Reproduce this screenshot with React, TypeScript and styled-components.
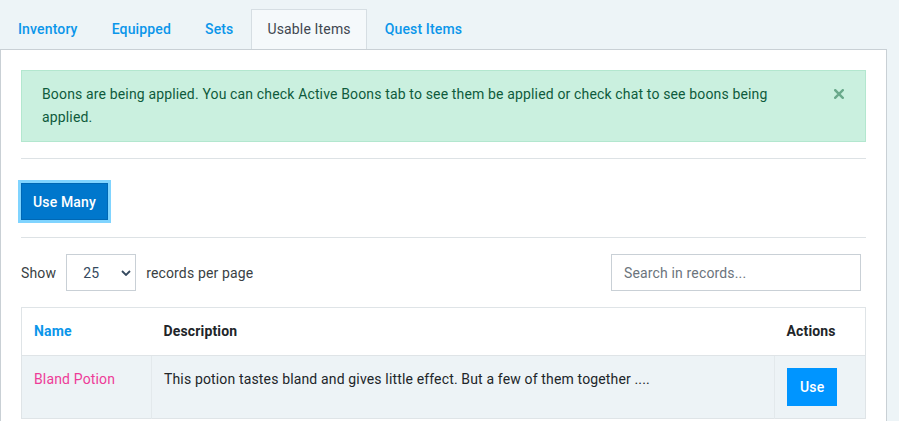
import React from "react";
import styled, { createGlobalStyle } from "styled-components";

const GlobalStyle = createGlobalStyle`
  html, body { margin: 0; padding: 0; }
  body {
    background: #edf4f7;
    font-family: Roboto, "Liberation Sans", Arial, sans-serif;
    font-size: 14px;
    letter-spacing: 0.15px;
    color: #212529;
    overflow: hidden;
  }
  * { box-sizing: border-box; }
  button, input, select { letter-spacing: inherit; }
`;

const Page = styled.div`
  width: 887px;
  padding-top: 9px;
`;

const TabList = styled.div`
  display: flex;
  padding-left: 2px;
  gap: 2px;
`;

const Tab = styled.div<{ $active?: boolean }>`
  padding: 9px 15px 10px;
  line-height: 20px;
  border: 1px solid ${(p) => (p.$active ? "#d6dee3" : "transparent")};
  border-bottom: none;
  background: ${(p) => (p.$active ? "#f5f9fb" : "transparent")};
  color: ${(p) => (p.$active ? "#3f4750" : "#0b96ea")};
  font-weight: ${(p) => (p.$active ? 400 : 500)};
  cursor: pointer;
`;

const Panel = styled.div`
  background: #fff;
  border: 1px solid #c9d0d5;
  border-bottom: none;
  padding: 20px 20px 0;
  min-height: 380px;
`;

const Alert = styled.div`
  position: relative;
  background: #caf0df;
  border: 1px solid #b3e7cf;
  color: #0e5b3c;
  padding: 12px 66px 12px 20px;
  line-height: 23px;
`;

const CloseButton = styled.button`
  position: absolute;
  top: 16px;
  right: 19px;
  width: 14px;
  height: 14px;
  padding: 0;
  border: none;
  background: none;
  display: flex;
  align-items: center;
  justify-content: center;
  cursor: pointer;
`;

const Divider = styled.hr<{ $flush?: boolean }>`
  border: none;
  border-top: 1px solid #dde2e5;
  margin: ${(p) => (p.$flush ? "0" : "16px 0 0")};
`;

const Toolbar = styled.div`
  padding: 24px 0 17px;
`;

const PrimaryButton = styled.button<{ $focused?: boolean }>`
  font-family: inherit;
  font-size: 14px;
  font-weight: 500;
  color: #fff;
  background: ${(p) => (p.$focused ? "#0077cc" : "#0095ff")};
  border: 1px solid ${(p) => (p.$focused ? "#0068b5" : "#0095ff")};
  box-shadow: ${(p) => (p.$focused ? "0 0 0 3px #80d4ff" : "none")};
  height: ${(p) => (p.$focused ? "37px" : "38px")};
  padding: 0 ${(p) => (p.$focused ? "11px" : "12px")};
  line-height: 20px;
  cursor: pointer;
`;

const FilterRow = styled.div`
  display: flex;
  align-items: center;
  justify-content: space-between;
  margin-top: 16px;
`;

const LengthControl = styled.div`
  display: flex;
  align-items: center;
  gap: 10px;
  color: #3a3f44;
`;

const SelectWrap = styled.div`
  position: relative;
  width: 70px;
  height: 37px;
`;

const Select = styled.select`
  appearance: none;
  -webkit-appearance: none;
  width: 100%;
  height: 100%;
  border: 1px solid #c9d0d6;
  border-radius: 0;
  background: #fff;
  font-family: inherit;
  font-size: 14px;
  color: #34495e;
  padding: 0 0 0 16px;
`;

const Chevron = styled.svg`
  position: absolute;
  right: 5px;
  top: 16px;
  pointer-events: none;
`;

const SearchInput = styled.input`
  width: 250px;
  height: 37px;
  margin-right: 5px;
  border: 1px solid #c9d0d6;
  border-radius: 0;
  font-family: inherit;
  font-size: 14px;
  padding: 0 12px;
  color: #212529;
  &::placeholder { color: #6b747c; }
`;

const Table = styled.table`
  width: 100%;
  margin-top: 16px;
  border-collapse: collapse;
  border: 1px solid #dfe4e7;
`;

const HeadCell = styled.th<{ $sortable?: boolean }>`
  text-align: left;
  font-weight: 700;
  padding: 12px 12px;
  line-height: 23px;
  color: ${(p) => (p.$sortable ? "#0b96ea" : "#212529")};
  border-bottom: 1px solid #dfe4e7;
  background: #fff;
`;

const Row = styled.tr`
  background: #edf3f6;
`;

const Cell = styled.td`
  padding: 12px 12px;
  line-height: 22px;
  vertical-align: top;
  border-left: 1px solid #e3e9ec;
  &:first-child { border-left: none; }
`;

const ItemName = styled.a`
  color: #ee3b98;
  text-decoration: none;
`;

export default function App() {
  return (
    <Page>
      <GlobalStyle />
      <TabList>
        <Tab>Inventory</Tab>
        <Tab>Equipped</Tab>
        <Tab>Sets</Tab>
        <Tab $active>Usable Items</Tab>
        <Tab>Quest Items</Tab>
      </TabList>
      <Panel>
        <Alert>
          Boons are being applied. You can check Active Boons tab to see them be applied or check chat to see boons being applied.
          <CloseButton aria-label="Close">
            <svg width="10" height="10" viewBox="0 0 10 10">
              <path d="M1.2 1.2 L8.8 8.8 M8.8 1.2 L1.2 8.8" stroke="#6aa98b" strokeWidth="2.4" strokeLinecap="square" />
            </svg>
          </CloseButton>
        </Alert>
        <Divider />
        <Toolbar>
          <PrimaryButton $focused>Use Many</PrimaryButton>
        </Toolbar>
        <Divider $flush />
        <FilterRow>
          <LengthControl>
            <span>Show</span>
            <SelectWrap>
              <Select defaultValue="25">
                <option value="10">10</option>
                <option value="25">25</option>
                <option value="50">50</option>
              </Select>
              <Chevron width="10" height="6" viewBox="0 0 10 6">
                <path d="M1 1 L5 5 L9 1" fill="none" stroke="#34495e" strokeWidth="1.8" />
              </Chevron>
            </SelectWrap>
            <span>records per page</span>
          </LengthControl>
          <SearchInput placeholder="Search in records..." />
        </FilterRow>
        <Table>
          <colgroup>
            <col style={{ width: 130 }} />
            <col />
            <col style={{ width: 91 }} />
          </colgroup>
          <thead>
            <tr>
              <HeadCell $sortable>Name</HeadCell>
              <HeadCell>Description</HeadCell>
              <HeadCell>Actions</HeadCell>
            </tr>
          </thead>
          <tbody>
            <Row>
              <Cell>
                <ItemName href="#">Bland Potion</ItemName>
              </Cell>
              <Cell>This potion tastes bland and gives little effect. But a few of them together ....</Cell>
              <Cell>
                <PrimaryButton>Use</PrimaryButton>
              </Cell>
            </Row>
          </tbody>
        </Table>
      </Panel>
    </Page>
  );
}
